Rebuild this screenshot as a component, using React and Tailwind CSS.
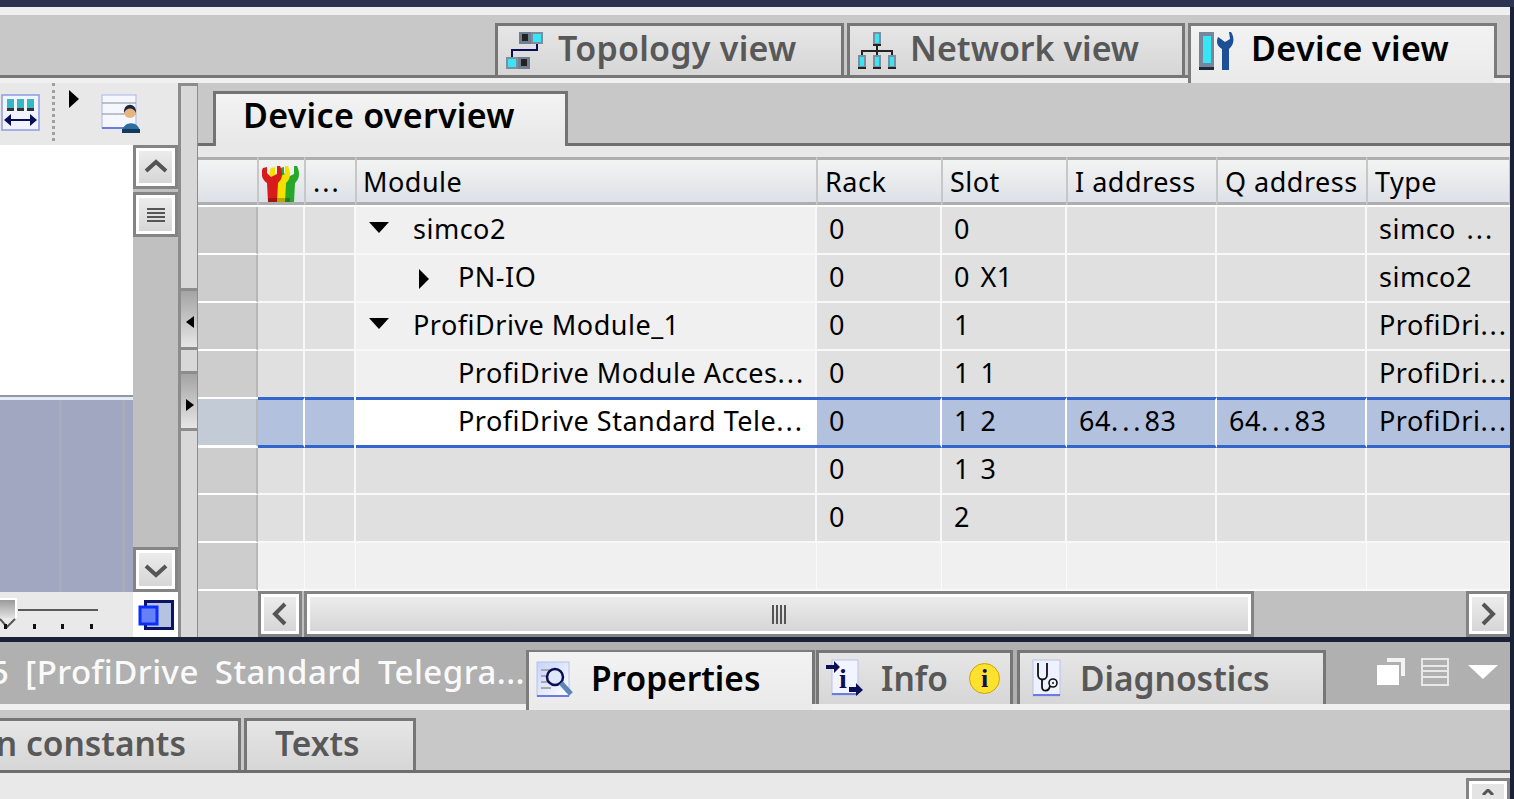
const FONT = "font-['Noto_Sans','Open_Sans',sans-serif]";

const COLS = 'grid grid-cols-[60px_47px_51px_461px_125px_125px_150px_150px_143px]';

const rows = [
  { name: 'simco2', indent: 'pl-[57px]', arrow: 'down', rack: '0', slot: '0', type: 'simco ...' },
  { name: 'PN-IO', indent: 'pl-[102px]', arrow: 'right', rack: '0', slot: '0 X1', type: 'simco2' },
  { name: 'ProfiDrive Module_1', indent: 'pl-[57px]', arrow: 'down', rack: '0', slot: '1', type: 'ProfiDri...' },
  { name: 'ProfiDrive Module Acces...', indent: 'pl-[102px]', rack: '0', slot: '1 1', type: 'ProfiDri...' },
  { name: 'ProfiDrive Standard Tele...', indent: 'pl-[102px]', rack: '0', slot: '1 2', i: '64...83', q: '64...83', type: 'ProfiDri...', selected: true },
  { name: '', rack: '0', slot: '1 3', dim: true },
  { name: '', rack: '0', slot: '2', dim: true },
];

// the dots of a clipped text sit further apart than the font sets them
function Txt({ children, wide }) {
  if (!children || !children.includes('...')) return children || null;
  const [a, b] = children.split('...');
  return (
    <span>
      {a}
      <span className={wide ? 'tracking-[4px]' : 'tracking-[2px]'}>...</span>
      {b}
    </span>
  );
}

function Chevron({ dir }) {
  const d = {
    up: 'M2 16 L12 7 L22 16',
    down: 'M2 8 L12 17 L22 8',
    left: 'M17 2 L7 12 L17 22',
    right: 'M7 2 L17 12 L7 22',
  }[dir];
  return (
    <svg width="24" height="24" viewBox="0 0 24 24" fill="none">
      <path d={d} stroke="#555" strokeWidth="4" />
    </svg>
  );
}

function ScrollButton({ children, className = '' }) {
  return (
    <div className={`border-[3px] border-[#848484] ${className}`}>
      <div className="h-full border-[3px] border-white bg-gradient-to-b from-[#ececec] to-[#d6d6d6] flex items-center justify-center">
        {children}
      </div>
    </div>
  );
}

function TopologyIcon() {
  return (
    <svg width="40" height="40" viewBox="0 0 40 40">
      <rect x="14" y="0" width="12" height="12" fill="#6f7f92" />
      <rect x="26" y="0" width="12" height="12" fill="#7e8ea0" />
      <rect x="17" y="2" width="6" height="7" fill="#222" />
      <rect x="28" y="2" width="8" height="8" fill="#37e6f4" />
      <rect x="1" y="25" width="12" height="12" fill="#7e8ea0" />
      <rect x="13" y="25" width="12" height="12" fill="#6f7f92" />
      <rect x="3" y="27" width="8" height="8" fill="#37e6f4" />
      <rect x="16" y="27" width="6" height="7" fill="#222" />
      <path d="M32 12 V18 H7 V25" fill="none" stroke="#0b0f55" strokeWidth="2" />
    </svg>
  );
}

function NetworkIcon() {
  return (
    <svg width="40" height="40" viewBox="0 0 40 40">
      <path d="M20 13 V18 M5 23 V19 H35 V23 M20 18 V23" fill="none" stroke="#222" strokeWidth="2" />
      {[[16, 0], [1, 23], [16, 23], [31, 23]].map(([x, y]) => (
        <g key={`${x}-${y}`}>
          <rect x={x} y={y} width="8" height="14" fill="#7e8ea0" />
          <rect x={x + 2} y={y + 2} width="4" height="9" fill="#37e6f4" />
          <rect x={x} y={y + 12} width="8" height="2" fill="#222" />
        </g>
      ))}
    </svg>
  );
}

function DeviceIcon() {
  return (
    <svg width="40" height="40" viewBox="0 0 40 40">
      <rect x="1" y="0" width="15" height="38" fill="#76879c" />
      <rect x="5" y="4" width="8" height="27" fill="#37e6f4" />
      <rect x="1" y="35" width="15" height="3" fill="#1c2a3c" />
      <path d="M20 5 C18 10 19 14 24 17 L24 38 L31 38 L31 17 C36 13 37 6 33 0 L31 0 L32 7 L27 10 L23 7 Z" fill="#1c4f96" />
    </svg>
  );
}

function WrenchIcon() {
  const w = 'M0 3 C-3 8 -1 15 4 18 L5 37 L14 37 L15 18 C20 14 20 7 17 1 L14 1 L14 9 L8 12 L4 8 L4 2 Z';
  return (
    <svg width="38" height="37" viewBox="0 0 38 37">
      <path transform="translate(18 0)" d={w} fill="#28a82a" />
      <path transform="translate(9 0)" d={w} fill="#f5e000" />
      <path transform="translate(1 0)" d={w} fill="#d81c1c" />
      <rect x="6" y="33" width="22" height="4" fill="#000" opacity=".25" />
    </svg>
  );
}

function Tab({ active, icon, label, className = '', textClass = '' }) {
  return (
    <div
      className={`flex items-start border-[3px] border-b-0 whitespace-nowrap ${active ? 'border-[#7c7c7c] bg-gradient-to-b from-[#f2f2f2] to-[#eaeaea] text-black' : 'border-[#767676] bg-gradient-to-b from-[#e6e6e6] to-[#d6d6d6] text-[#585858]'} ${className}`}
    >
      {icon}
      <span className={`font-semibold leading-[44px] ${textClass}`}>{label}</span>
    </div>
  );
}

function LeftPanel() {
  return (
    <div className="w-[178px] flex flex-col shrink-0">
      <div className="h-[62px] bg-[#e8e8e8] flex items-start relative">
        <svg className="mt-[11px] ml-[1px]" width="40" height="37" viewBox="0 0 40 37">
          <rect x="1" y="1" width="37" height="35" fill="#f1f4ff" stroke="#8e9be0" strokeWidth="1.5" />
          {[6, 16, 26].map((x) => (
            <g key={x}>
              <rect x={x} y="5" width="7" height="12" fill="#37b7c4" />
              <rect x={x} y="14" width="7" height="3" fill="#333" />
            </g>
          ))}
          <path d="M6 26 H33" stroke="#0b0f55" strokeWidth="2" />
          <path d="M3 26 L10 20 V32 Z M36 26 L29 20 V32 Z" fill="#0b0f55" />
        </svg>
        <div className="ml-[11px] mt-0 h-[58px] border-l-[3px] border-dotted border-[#a0a0a0]" />
        <svg className="ml-[14px] mt-[7px]" width="10" height="18" viewBox="0 0 10 18">
          <path d="M0 0 L10 9 L0 18 Z" fill="#000" />
        </svg>
        <svg className="ml-[22px] mt-[11px]" width="40" height="39" viewBox="0 0 40 39">
          <rect x="1" y="1" width="34" height="33" fill="#f4f7ff" stroke="#a9b5e4" />
          <path d="M1 9 H35 M1 20 H35" stroke="#8a8a8a" />
          <rect x="1" y="33" width="30" height="2" fill="#6c7be0" />
          <circle cx="29" cy="18" r="6" fill="#e8b67c" />
          <path d="M23 19 C22 8 36 8 35 19 C33 13 25 13 23 19 Z" fill="#1d2440" />
          <path d="M21 39 C21 26 39 26 39 39 Z" fill="#2c6c9f" />
          <rect x="21" y="35" width="18" height="4" fill="#123a5c" />
        </svg>
      </div>
      <div className="flex flex-1 min-h-0">
        <div className="w-[133px] flex flex-col">
          <div className="h-[250px] bg-white" />
          <div className="h-[2px] bg-[#8f98a8]" />
          <div className="h-[3px] bg-[#e6eaf6]" />
          <div className="flex-1 bg-[#a1a6c1] flex">
            <div className="w-[62px] border-r-[3px] border-[#a8acbc]" />
            <div className="w-[63px] border-r-[3px] border-[#a8acbc]" />
          </div>
          <div className="h-[45px] bg-[#e9e9e9] relative">
            <div className="mt-[17px] ml-[18px] w-[80px] h-[2px] bg-[#5a5a5a]" />
            <div className="absolute left-[-2px] top-[6px] w-[19px] h-[20px] bg-gradient-to-b from-[#9a9a9a] to-[#e2e2e2] border-t-2 border-r-2 border-white" />
            <svg className="absolute left-0 top-[25px]" width="100" height="14" viewBox="0 0 100 14">
              <path d="M0 2 L7 10 L15 2" fill="none" stroke="#555" strokeWidth="2" />
              <path d="M4 7 H7 V12 H4 Z M33 7 H36 V12 H33 Z M61 7 H64 V12 H61 Z M90 7 H93 V12 H90 Z" fill="#111" />
            </svg>
          </div>
        </div>
        <div className="w-[45px] flex flex-col bg-[#c0c0c0]">
          <ScrollButton className="h-[44px]"><Chevron dir="up" /></ScrollButton>
          <ScrollButton className="h-[45px] mt-[3px] w-full">
            <svg width="20" height="16" viewBox="0 0 20 16">
              <path d="M1 2 H19 M1 6 H19 M1 10 H19 M1 14 H19" stroke="#555" strokeWidth="2" />
            </svg>
          </ScrollButton>
          <div className="flex-1" />
          <ScrollButton className="h-[45px]"><Chevron dir="down" /></ScrollButton>
          <div className="h-[45px] bg-white flex items-center justify-center">
            <svg width="36" height="34" viewBox="0 0 36 34">
              <rect x="7.5" y="3.5" width="27" height="27" fill="#b5c3e3" stroke="#0a1366" strokeWidth="3" />
              <rect x="2" y="9" width="17" height="17" fill="#6681f8" stroke="#0b2eff" strokeWidth="3" />
            </svg>
          </div>
        </div>
      </div>
    </div>
  );
}

function Splitter() {
  return (
    <div className="w-[20px] shrink-0 bg-[#d8d8d8] border-l-[3px] border-t-[3px] border-r border-[#8c8c8c] flex flex-col">
      <div className="h-[202px]" />
      <div className="h-[62px] border-y-[3px] border-[#8c8c8c] bg-gradient-to-b from-[#a4a4a4] to-[#e6e6e6] flex items-center justify-start pl-[5px] pt-[6px]">
        <svg width="8" height="12" viewBox="0 0 8 12"><path d="M8 0 L0 6 L8 12 Z" fill="#000" /></svg>
      </div>
      <div className="h-[21px]" />
      <div className="h-[60px] border-y-[3px] border-[#8c8c8c] bg-gradient-to-b from-[#a4a4a4] to-[#e6e6e6] flex items-center justify-start pl-[5px] pt-[8px]">
        <svg width="8" height="12" viewBox="0 0 8 12"><path d="M0 0 L8 6 L0 12 Z" fill="#000" /></svg>
      </div>
    </div>
  );
}

function HeaderCell({ children, className = '' }) {
  return (
    <div className={`h-[48px] border-t-[3px] border-b-[3px] border-l border-[#aeaeae] border-l-[#c6c6c6] mr-[1px] bg-gradient-to-b from-[#f3f3f3] via-[#e8eaec] to-[#dde1e8] flex items-end pb-[4px] pl-[7px] text-[27px] leading-[32px] tracking-[0.5px] text-black whitespace-nowrap overflow-hidden ${className}`}>
      {children}
    </div>
  );
}

function DataRow({ row }) {
  const sel = row.selected;
  const h = sel ? 'h-[51px]' : 'h-[48px]';
  const cell = `${h} pb-[2px] flex items-center pl-[12px] text-[27px] tracking-[0.5px] [word-spacing:3px] text-black whitespace-nowrap overflow-hidden ${sel ? 'bg-[#b2c1dd]' : 'bg-[#e0e0e0]'}`;
  const line = 'border-r-2 border-b-2 border-[#f8f8f8]';
  const selLine = 'border-y-[3px] border-y-[#3366cc] border-r-2 border-r-white';
  return (
    <div className={`${COLS} ${sel ? 'bg-white -mt-[2px] -mb-[1px] relative z-10' : ''}`}>
      <div className={`h-[48px] border-b-2 border-r-[2px] border-b-white border-r-[#b8b8b8] ${sel ? 'mt-[2px] bg-[#c3ccd6]' : 'bg-[#cdcdcd]'}`} />
      <div className={`${cell} ${sel ? selLine : line}`} />
      <div className={`${cell} ${sel ? 'w-[49px] border-y-[3px] border-y-[#3366cc]' : line}`} />
      <div className={`${h} flex items-center relative text-[27px] tracking-[0.5px] whitespace-nowrap ${row.indent || ''} ${sel ? 'bg-white border-y-[3px] border-y-[#3366cc]' : row.dim ? `bg-[#e0e0e0] ${line}` : `bg-[#f0f0f0] ${line}`}`}>
        {row.arrow === 'down' && (
          <svg className="absolute left-[13px] top-[15px]" width="20" height="12" viewBox="0 0 20 12"><path d="M0 0 H20 L10 11 Z" fill="#000" /></svg>
        )}
        {row.arrow === 'right' && (
          <svg className="absolute left-[63px] top-[14px]" width="10" height="20" viewBox="0 0 10 20"><path d="M0 0 L10 10 L0 20 Z" fill="#000" /></svg>
        )}
        <span className="-mt-[2px] text-black"><Txt>{row.name}</Txt></span>
      </div>
      <div className={`${cell} ${sel ? selLine : line}`}>{row.rack}</div>
      <div className={`${cell} ${sel ? selLine : line}`}>{row.slot}</div>
      <div className={`${cell} ${sel ? selLine : line}`}><Txt wide>{row.i}</Txt></div>
      <div className={`${cell} ${sel ? selLine : line}`}><Txt wide>{row.q}</Txt></div>
      <div className={`${cell} ${sel ? 'border-y-[3px] border-y-[#3366cc]' : 'border-b-2 border-[#f8f8f8]'}`}><Txt>{row.type}</Txt></div>
    </div>
  );
}

function DeviceOverview() {
  return (
    <div className="flex-1 min-w-0 flex flex-col">
      <div className="h-[63px] bg-[#c8c8c8] border-b-[3px] border-[#6e6e6e] relative pl-[15px] pt-[8px]">
        <div className="relative z-10 w-[355px] h-[55px] border-[3px] border-b-0 border-[#737373] bg-gradient-to-b from-[#f3f3f3] to-[#e8e8e8] text-[34px] font-semibold tracking-[0.3px] leading-[42px] pl-[27px] text-black">
          Device overview
        </div>
      </div>
      <div className="h-[11px] bg-[#e8e8e8]" />
      <div className={COLS}>
        <HeaderCell className="border-l-0 mr-0" />
        <HeaderCell className="!pl-[3px] !pb-0 items-center"><WrenchIcon /></HeaderCell>
        <HeaderCell><Txt>...</Txt></HeaderCell>
        <HeaderCell className="!pl-[6px]">Module</HeaderCell>
        <HeaderCell>Rack</HeaderCell>
        <HeaderCell>Slot</HeaderCell>
        <HeaderCell>I address</HeaderCell>
        <HeaderCell>Q address</HeaderCell>
        <HeaderCell className="mr-0">Type</HeaderCell>
      </div>
      <div className="h-[2px] bg-white" />
      {rows.map((r, i) => <DataRow key={i} row={r} />)}
      <div className={COLS}>
        <div className="h-[48px] bg-[#cdcdcd] border-r-2 border-r-[#b8b8b8] border-b-2 border-b-white" />
        {[0, 1, 2, 3, 4, 5, 6, 7].map((c) => (
          <div key={c} className="h-[48px] bg-[#f0f0f0] border-r border-b-2 border-[#fafafa]" />
        ))}
      </div>
      <div className="flex-1 flex bg-[#c0c0c0]">
        <div className="w-[60px] bg-[#cdcdcd]" />
        <ScrollButton className="w-[44px]"><Chevron dir="left" /></ScrollButton>
        <ScrollButton className="w-[950px] ml-[2px]">
          <svg width="16" height="19" viewBox="0 0 16 19">
            <path d="M2 0 V19 M6 0 V19 M10 0 V19 M14 0 V19" stroke="#555" strokeWidth="2" />
          </svg>
        </ScrollButton>
        <div className="flex-1" />
        <ScrollButton className="w-[44px]"><Chevron dir="right" /></ScrollButton>
      </div>
    </div>
  );
}

function PropertiesIcon() {
  return (
    <svg width="38" height="40" viewBox="0 0 38 40">
      <defs>
        <linearGradient id="pg" x1="0" y1="0" x2="1" y2="1">
          <stop offset="0" stopColor="#c6d2fb" />
          <stop offset="1" stopColor="#ffffff" />
        </linearGradient>
      </defs>
      <rect x="1" y="1" width="32" height="34" fill="url(#pg)" stroke="#b8c2e6" />
      <rect x="1" y="34" width="32" height="2" fill="#6c7be0" />
      <path d="M5 9 H15 M5 15 H12 M5 21 H12 M5 27 H15" stroke="#a8a8a8" strokeWidth="2" />
      <circle cx="19" cy="16" r="8" fill="#dfe8f6" stroke="#0b0f55" strokeWidth="2.5" />
      <path d="M25 22 L35 33" stroke="#5d86b8" strokeWidth="5" />
    </svg>
  );
}

function InfoIcon() {
  return (
    <svg width="40" height="40" viewBox="0 0 40 40">
      <rect x="7" y="1" width="26" height="35" fill="#f2f5ff" stroke="#b8c2e6" />
      <rect x="7" y="34" width="26" height="2" fill="#6c7be0" />
      <path d="M1 6 H9 V2 L15 8 L9 14 V10 H1 Z M24 28 H31 V24 L38 31 L31 37 V33 H24 Z" fill="#0b0f55" />
      <text x="14" y="29" fontSize="28" fontWeight="700" fontFamily="Liberation Serif" fill="#0b0f55">i</text>
    </svg>
  );
}

function DiagnosticsIcon() {
  return (
    <svg width="30" height="40" viewBox="0 0 30 40">
      <rect x="1" y="1" width="27" height="36" fill="#eef1ff" stroke="#b8c2e6" />
      <rect x="1" y="35" width="27" height="2" fill="#6c7be0" />
      <path d="M6 4 V16 C6 22 15 22 15 16 V4" fill="none" stroke="#111" strokeWidth="1.8" />
      <path d="M10 20 V28 C10 33 17 33 18 27" fill="none" stroke="#111" strokeWidth="1.8" />
      <circle cx="21" cy="24" r="4" fill="none" stroke="#111" strokeWidth="1.6" />
      <circle cx="21" cy="24" r="1" fill="#111" />
    </svg>
  );
}

function LowerPanel() {
  return (
    <div className="flex-1 flex flex-col min-h-0">
      <div className="h-[5px] bg-[#1a2035]" />
      <div className="h-[62px] bg-[#b0b0b0] flex pt-[8px] relative">
        <div className="w-[526px] shrink-0 overflow-hidden flex justify-end pr-[1px] text-[33px] leading-[44px] font-medium tracking-[0.45px] text-[#fafafa] whitespace-nowrap [word-spacing:7px]">
          <span>5 [ProfiDrive Standard Telegra...</span>
        </div>
        <Tab active className="w-[286px] h-[60px] pl-[7px] pt-[9px] text-[33.5px] border-r-0 border-t-[2px] z-10" icon={<PropertiesIcon />} label="Properties" textClass="ml-[17px] -mt-[5px]" />
        <div className="w-[3px] h-[54px] bg-[#767676]" />
        <Tab className="ml-[1px] w-[197px] h-[54px] pl-[6px] pt-[6px] text-[33.5px]" icon={<InfoIcon />} label="Info" textClass="ml-[16px] -mt-[3px]" />
        <div className="absolute left-[969px] top-[21px] w-[31px] h-[31px] rounded-full bg-[#ffe12e] border border-[#c9a800] flex items-center justify-center text-[26px] font-bold text-[#0b0f55] font-['Liberation_Serif']">i</div>
        <Tab className="ml-[4px] w-[309px] h-[54px] pl-[12px] pt-[6px] text-[33.5px]" icon={<DiagnosticsIcon />} label="Diagnostics" textClass="ml-[18px] -mt-[3px]" />
        <svg className="ml-[50px] mt-[7px]" width="124" height="30" viewBox="0 0 124 30">
          <path d="M11 1 H29 V19 H25 V5 H11 Z" fill="#f4f4f4" />
          <rect x="1" y="8" width="22" height="20" fill="#fff" />
          <path d="M46 2 H72 V28 H46 Z M46 9 H72 M46 14 H72 M46 20 H72" fill="none" stroke="#e8e8e8" strokeWidth="2" />
          <path d="M92 8 H122 L107 22 Z" fill="#fff" />
        </svg>
      </div>
      <div className="h-[6px] bg-[#f0f0f0]" />
      <div className="h-[63px] bg-[#c8c8c8] border-b-[3px] border-[#6e6e6e] flex pt-[8px]">
        <Tab className="w-[241px] h-[52px] justify-end pr-[52px] text-[33.5px] border-l-0" label="n constants" />
        <Tab className="ml-[3px] w-[172px] h-[52px] pl-[28px] text-[33.5px]" label="Texts" />
      </div>
      <div className="flex-1 bg-[#e9e9e9] flex justify-end">
        <div className="w-[44px] mt-[5px] border-[3px] border-b-0 border-[#848484]">
          <div className="h-full border-[3px] border-b-0 border-white bg-[#e4e4e4] flex justify-center pt-[5px]">
            <svg width="14" height="6" viewBox="0 0 14 6"><path d="M2 6 L7 1 L12 6" fill="none" stroke="#555" strokeWidth="3" /></svg>
          </div>
        </div>
      </div>
    </div>
  );
}

export default function App() {
  return (
    <div className={`w-[1514px] h-[799px] overflow-hidden bg-[#1a2035] pr-[4px] flex flex-col ${FONT}`}>
      <div className="h-[7px] bg-[#2d3451] shrink-0 -mr-[4px]" />
      <div className="h-[8px] bg-[#f0f0f0] shrink-0" />
      <div className="h-[63px] bg-[#c8c8c8] shrink-0 border-b-[3px] border-[#767676] flex justify-end pt-[8px] pr-[13px] relative">
        <Tab className="w-[349px] h-[52px] pl-[7px] pt-[6px] text-[34px] tracking-[0.25px]" icon={<TopologyIcon />} label="Topology view" textClass="ml-[13px] -mt-[6px]" />
        <Tab className="ml-[3px] w-[338px] h-[52px] pl-[7px] pt-[6px] text-[34px]" icon={<NetworkIcon />} label="Network view" textClass="ml-[13px] -mt-[6px]" />
        <Tab active className="ml-[3px] w-[306px] h-[60px] pl-[7px] pt-[6px] text-[34px] tracking-[0.4px] border-r-0 z-10" icon={<DeviceIcon />} label="Device view" textClass="ml-[13px] -mt-[6px]" />
        <div className="w-[3px] h-[52px] bg-[#7c7c7c]" />
      </div>
      <div className="h-[5px] bg-[#f0f0f0] shrink-0" />
      <div className="h-[554px] shrink-0 flex bg-[#c8c8c8]">
        <LeftPanel />
        <Splitter />
        <DeviceOverview />
      </div>
      <LowerPanel />
    </div>
  );
}
